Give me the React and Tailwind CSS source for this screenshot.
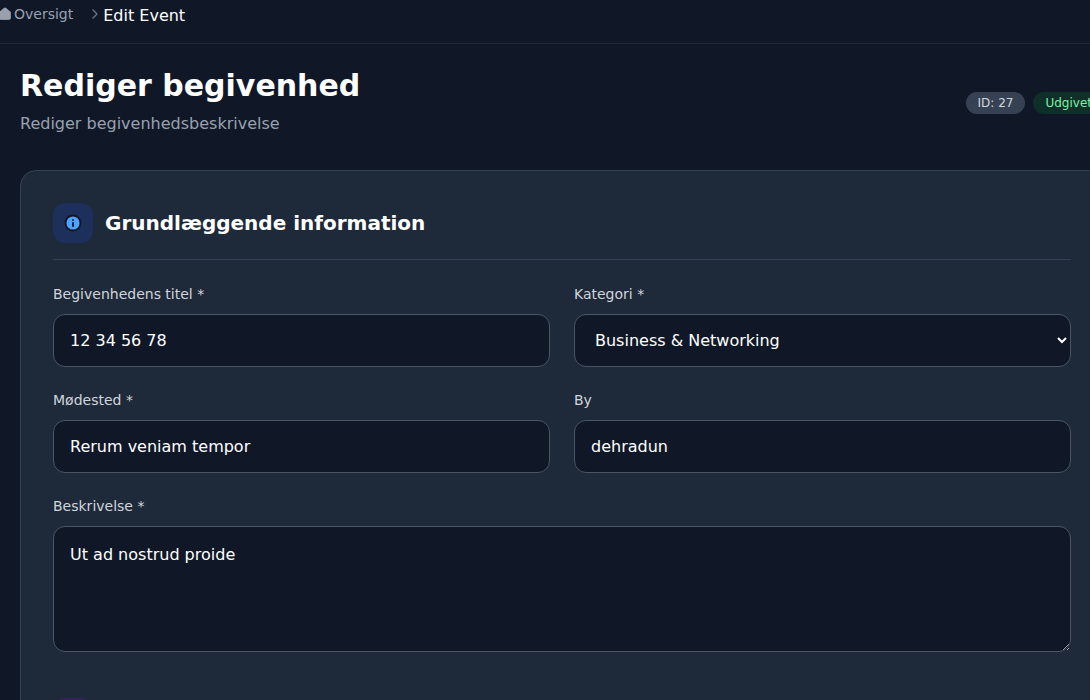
import { Home, ChevronRight, Info } from "lucide-react";

const font = { fontFamily: '"DejaVu Sans", sans-serif' };

const Field = ({ label, children }) => (
  <div className="flex flex-col">
    <label className="text-sm text-gray-300 mb-[10px] leading-5">{label}</label>
    {children}
  </div>
);

const inputCls =
  "h-[53px] w-full rounded-xl border border-gray-600 bg-gray-900 px-4 text-base text-white outline-none";

export default function App() {
  return (
    <div className="w-full h-[700px] overflow-hidden bg-gray-900" style={font}>
      <div className="w-[1124px]">
        <div className="h-[44px] border-b border-gray-800 flex items-start pt-[4px] gap-[2px]">
          <Home className="w-3.5 h-3.5 text-gray-400 fill-gray-400 -ml-[2px] mt-[3px]" />
          <span className="text-sm text-gray-400">Oversigt</span>
          <ChevronRight className="w-4 h-4 text-gray-500 ml-[12px] mt-[2px]" />
          <span className="text-base text-white -ml-[2px]">Edit Event</span>
        </div>
        <div className="px-5">
          <div className="flex justify-between items-start pt-[22px]">
            <div>
              <h1 className="text-[30px] font-bold text-white leading-10">Rediger begivenhed</h1>
              <p className="text-base text-gray-400 mt-[6px]">Rediger begivenhedsbeskrivelse</p>
            </div>
            <div className="flex gap-2 mt-[26px]">
              <span className="px-3 py-[3px] rounded-full bg-gray-700 text-gray-300 text-xs">ID: 27</span>
              <span className="px-3 py-[3px] rounded-full bg-green-900/40 text-green-300 text-xs">Udgivet</span>
            </div>
          </div>
          <div className="mt-[34px] rounded-2xl border border-gray-700 bg-gray-800 px-8 pt-8 pb-10">
            <div className="flex items-center gap-3 pb-4 border-b border-gray-700">
              <div className="w-10 h-10 rounded-xl bg-blue-900/40 flex items-center justify-center">
                <Info className="w-[18px] h-[18px] text-gray-900 fill-blue-400" strokeWidth={2.5} />
              </div>
              <h2 className="text-xl font-bold text-white">Grundlæggende information</h2>
            </div>
            <div className="grid grid-cols-2 gap-x-6 gap-y-[23px] mt-6">
              <Field label="Begivenhedens titel *">
                <input className={inputCls} defaultValue="12 34 56 78" />
              </Field>
              <Field label="Kategori *">
                <select className={inputCls} defaultValue="b">
                  <option value="b">Business &amp; Networking</option>
                </select>
              </Field>
              <Field label="Mødested *">
                <input className={inputCls} defaultValue="Rerum veniam tempor" />
              </Field>
              <Field label="By">
                <input className={inputCls} defaultValue="dehradun" />
              </Field>
              <div className="col-span-2">
                <Field label="Beskrivelse *">
                  <textarea
                    className="h-[126px] w-full rounded-xl border border-gray-600 bg-gray-900 px-4 py-4 text-base text-white outline-none"
                    defaultValue="Ut ad nostrud proide"
                  />
                </Field>
              </div>
            </div>
            <div className="mt-[46px] w-10 h-10 rounded-xl bg-purple-900/40" />
          </div>
        </div>
      </div>
    </div>
  );
}
